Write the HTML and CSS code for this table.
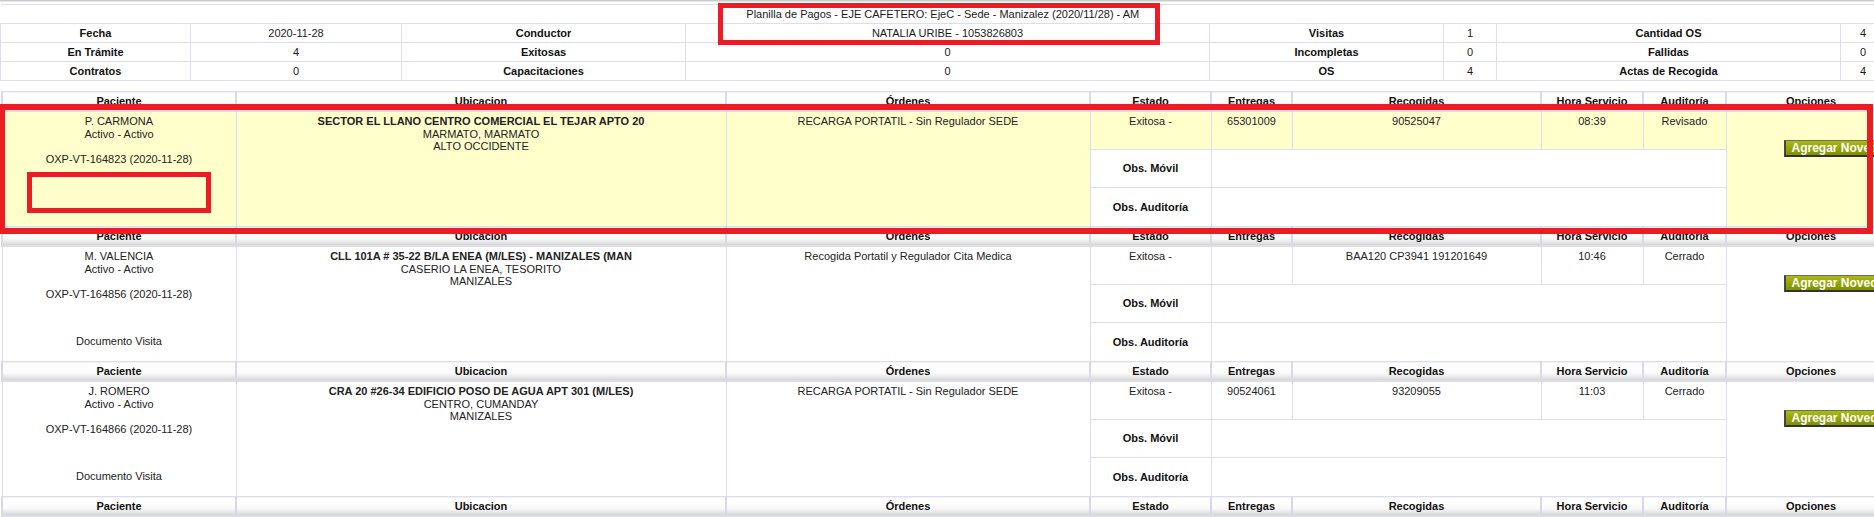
FILE: index.html
```html
<!DOCTYPE html>
<html lang="es">
<head>
<meta charset="utf-8">
<title>Planilla de Pagos</title>
<link rel="stylesheet" href="styles.css">
</head>
<body>
<div class="topline"></div>
<table class="resumen">
  <colgroup>
    <col class="r1"><col class="r2"><col class="r3"><col class="r4"><col class="r5"><col class="r6"><col class="r7"><col class="r8">
  </colgroup>
  <tr><td colspan="8" class="titulo">Planilla de Pagos - EJE CAFETERO: EjeC - Sede - Manizalez (2020/11/28) - AM</td></tr>
  <tr><th>Fecha</th><td>2020-11-28</td><th>Conductor</th><td>NATALIA URIBE - 1053826803</td><th>Visitas</th><td>1</td><th>Cantidad OS</th><td>4</td></tr>
  <tr><th>En Trámite</th><td>4</td><th>Exitosas</th><td>0</td><th>Incompletas</th><td>0</td><th>Fallidas</th><td>0</td></tr>
  <tr><th>Contratos</th><td>0</td><th>Capacitaciones</th><td>0</td><th>OS</th><td>4</td><th>Actas de Recogida</th><td>4</td></tr>
</table>

<table class="planilla">
  <colgroup>
    <col class="c-pac"><col class="c-ubi"><col class="c-ord"><col class="c-est"><col class="c-ent"><col class="c-rec"><col class="c-hor"><col class="c-aud"><col class="c-opc">
  </colgroup>
  <tbody class="visita marcada">
    <tr class="hdr"><th>Paciente</th><th>Ubicacion</th><th>Órdenes</th><th>Estado</th><th>Entregas</th><th>Recogidas</th><th>Hora Servicio</th><th>Auditoría</th><th>Opciones</th></tr>
    <tr class="s1">
      <td rowspan="3" class="amarillo">P. CARMONA<br>Activo - Activo<br><br>OXP-VT-164823 (2020-11-28)</td>
      <td rowspan="3" class="amarillo"><b>SECTOR EL LLANO CENTRO COMERCIAL EL TEJAR APTO 20</b><br>MARMATO, MARMATO<br>ALTO OCCIDENTE</td>
      <td rowspan="3" class="amarillo">RECARGA PORTATIL - Sin Regulador SEDE</td>
      <td class="amarillo">Exitosa -</td>
      <td class="amarillo">65301009</td>
      <td class="amarillo">90525047</td>
      <td class="amarillo">08:39</td>
      <td class="amarillo">Revisado</td>
      <td rowspan="3" class="amarillo opc"><span class="btn">Agregar Novedad</span></td>
    </tr>
    <tr class="s2"><td class="obs">Obs. Móvil</td><td colspan="4"></td></tr>
    <tr class="s3"><td class="obs">Obs. Auditoría</td><td colspan="4"></td></tr>
  </tbody>
  <tbody class="visita">
    <tr class="hdr"><th>Paciente</th><th>Ubicacion</th><th>Órdenes</th><th>Estado</th><th>Entregas</th><th>Recogidas</th><th>Hora Servicio</th><th>Auditoría</th><th>Opciones</th></tr>
    <tr class="s1">
      <td rowspan="3">M. VALENCIA<br>Activo - Activo<br><br>OXP-VT-164856 (2020-11-28)<div class="doc">Documento Visita</div></td>
      <td rowspan="3"><b>CLL 101A # 35-22 B/LA ENEA (M/LES) - MANIZALES (MAN</b><br>CASERIO LA ENEA, TESORITO<br>MANIZALES</td>
      <td rowspan="3">Recogida Portatil y Regulador Cita Medica</td>
      <td>Exitosa -</td>
      <td></td>
      <td>BAA120 CP3941 191201649</td>
      <td>10:46</td>
      <td>Cerrado</td>
      <td rowspan="3" class="opc"><span class="btn">Agregar Novedad</span></td>
    </tr>
    <tr class="s2"><td class="obs">Obs. Móvil</td><td colspan="4"></td></tr>
    <tr class="s3"><td class="obs">Obs. Auditoría</td><td colspan="4"></td></tr>
  </tbody>
  <tbody class="visita">
    <tr class="hdr"><th>Paciente</th><th>Ubicacion</th><th>Órdenes</th><th>Estado</th><th>Entregas</th><th>Recogidas</th><th>Hora Servicio</th><th>Auditoría</th><th>Opciones</th></tr>
    <tr class="s1">
      <td rowspan="3">J. ROMERO<br>Activo - Activo<br><br>OXP-VT-164866 (2020-11-28)<div class="doc">Documento Visita</div></td>
      <td rowspan="3"><b>CRA 20 #26-34 EDIFICIO POSO DE AGUA APT 301 (M/LES)</b><br>CENTRO, CUMANDAY<br>MANIZALES</td>
      <td rowspan="3">RECARGA PORTATIL - Sin Regulador SEDE</td>
      <td>Exitosa -</td>
      <td>90524061</td>
      <td>93209055</td>
      <td>11:03</td>
      <td>Cerrado</td>
      <td rowspan="3" class="opc"><span class="btn">Agregar Novedad</span></td>
    </tr>
    <tr class="s2"><td class="obs">Obs. Móvil</td><td colspan="4"></td></tr>
    <tr class="s3"><td class="obs">Obs. Auditoría</td><td colspan="4"></td></tr>
  </tbody>
  <tbody class="visita">
    <tr class="hdr"><th>Paciente</th><th>Ubicacion</th><th>Órdenes</th><th>Estado</th><th>Entregas</th><th>Recogidas</th><th>Hora Servicio</th><th>Auditoría</th><th>Opciones</th></tr>
  </tbody>
</table>

<div class="marca marca-titulo"></div>
<div class="marca marca-fila"></div>
<div class="marca marca-doc"></div>
</body>
</html>
```
FILE: styles.css
```css
html, body {
  margin: 0;
  padding: 0;
  overflow: hidden;
  background: #ffffff;
}
body {
  position: relative;
  width: 1874px;
  height: 517px;
  font-family: "Liberation Sans", Arial, sans-serif;
  font-size: 11px;
  color: #222222;
}

.topline {
  height: 1px;
  background: #cbcbcb;
  border-bottom: 1px solid #e6e6e6;
}

/* resumen superior */
.resumen {
  margin-top: 2px;
  width: 1885px;
  table-layout: fixed;
  border-collapse: collapse;
}
.resumen .r1 { width: 190px; }
.resumen .r2 { width: 211px; }
.resumen .r3 { width: 284px; }
.resumen .r4 { width: 524px; }
.resumen .r5 { width: 234px; }
.resumen .r6 { width: 53px; }
.resumen .r7 { width: 344px; }
.resumen .r8 { width: 45px; }
.resumen td, .resumen th {
  height: 18px;
  padding: 0 2px;
  border: 1px solid #dcdcf3;
  text-align: center;
  vertical-align: middle;
  line-height: 12.5px;
  font-size: 11px;
  color: #1a1a1a;
  white-space: nowrap;
  overflow: hidden;
}
.resumen th { font-weight: bold; color: #111111; }
.resumen .titulo { border-left: 0; }

/* planilla */
.planilla {
  margin-top: 10px;
  margin-left: 1px;
  width: 1894px;
  table-layout: fixed;
  border-collapse: collapse;
}
.c-pac { width: 234px; }
.c-ubi { width: 490px; }
.c-ord { width: 364px; }
.c-est { width: 121px; }
.c-ent { width: 81px; }
.c-rec { width: 249px; }
.c-hor { width: 102px; }
.c-aud { width: 83px; }
.c-opc { width: 170px; }

.planilla td, .planilla th {
  border: 1px solid #dcdcf3;
  font-size: 11px;
  line-height: 12.5px;
  text-align: center;
  white-space: nowrap;
  overflow: hidden;
}
.planilla th {
  height: 19px;
  padding: 0;
  font-weight: bold;
  color: #111111;
  vertical-align: middle;
  border-left: 2px solid #d8d8ea;
  border-right: 2px solid #d8d8ea;
  background: linear-gradient(to bottom, #ffffff 0%, #fbfbfb 55%, #e4e4e4 80%, #d6d6d6 92%, #ececec 100%);
}
.planilla td {
  padding: 3px 3px 0;
  vertical-align: top;
  background: #ffffff;
}
.planilla .s1 td { height: 34px; }
.planilla .s2 td { height: 37px; padding: 0; }
.planilla .s3 td { height: 38px; padding: 0; }
.planilla td.obs {
  vertical-align: middle;
  font-weight: bold;
  color: #111111;
}
.planilla td.amarillo { background: #ffffcc; }
.planilla td.opc {
  text-align: left;
  padding: 28px 0 0 57px;
}
.doc { margin-top: 35px; }

.btn {
  display: inline-block;
  box-sizing: border-box;
  height: 17px;
  padding: 0 6px;
  font-family: "Liberation Sans", Arial, sans-serif;
  font-size: 12px;
  font-weight: bold;
  line-height: 14px;
  color: #ffffff;
  white-space: nowrap;
  background: linear-gradient(to bottom, #aab916 0%, #95a506 50%, #7f8f00 100%);
  border: 1px solid #6f6f55;
  border-left: 2px solid #444444;
  border-bottom: 2px solid #333333;
}

/* marcas rojas de anotación */
.marca {
  position: absolute;
  box-sizing: border-box;
  border: 5px solid #ed1c24;
}
.marca-titulo { left: 718px; top: 3px; width: 442px; height: 42px; }
.marca-fila { left: -1px; top: 104px; width: 1874px; height: 130px; border-width: 6px; }
.marca-doc { left: 27px; top: 172px; width: 184px; height: 41px; }
```
